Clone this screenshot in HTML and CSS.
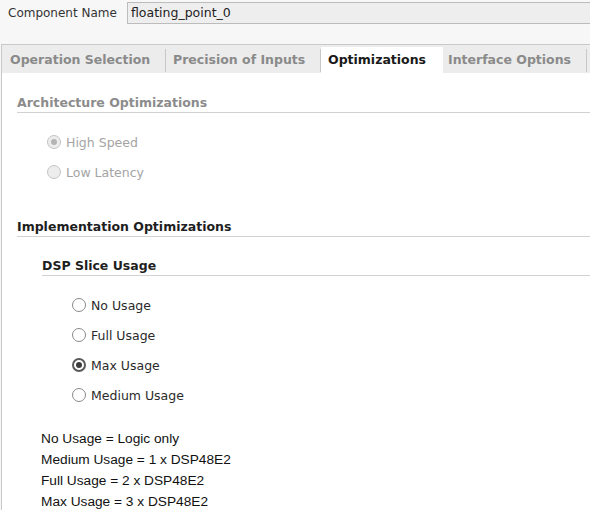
FILE: index.html
```html
<!DOCTYPE html>
<html>
<head>
<meta charset="utf-8">
<link rel="stylesheet" href="styles.css">
</head>
<body>
<div class="top">
  <span class="label">Component Name</span>
  <div class="field">floating_point_0</div>
</div>
<div class="pane">
  <div class="tabs">
    <div class="tab t1">Operation Selection</div><span class="sep"></span>
    <div class="tab t2">Precision of Inputs</div><span class="sep"></span>
    <div class="tab t3 active">Optimizations</div>
    <div class="tab t4">Interface Options</div><span class="sep"></span>
  </div>
  <div class="content">
    <div class="heading dim h1">Architecture Optimizations</div>
    <div class="radios arch">
      <div class="row disabled"><span class="radio checked"></span><span>High Speed</span></div>
      <div class="row disabled"><span class="radio"></span><span>Low Latency</span></div>
    </div>
    <div class="heading h2">Implementation Optimizations</div>
    <div class="sub">
      <div class="heading h3">DSP Slice Usage</div>
      <div class="radios dsp">
        <div class="row"><span class="radio"></span><span>No Usage</span></div>
        <div class="row"><span class="radio"></span><span>Full Usage</span></div>
        <div class="row"><span class="radio checked"></span><span>Max Usage</span></div>
        <div class="row"><span class="radio"></span><span>Medium Usage</span></div>
      </div>
      <div class="notes">
        <div>No Usage = Logic only</div>
        <div>Medium Usage = 1 x DSP48E2</div>
        <div>Full Usage = 2 x DSP48E2</div>
        <div>Max Usage = 3 x DSP48E2</div>
      </div>
    </div>
  </div>
</div>
</body>
</html>
```
FILE: styles.css
```css
html, body {
  margin: 0;
  padding: 0;
  background: #f7f7f7;
  font-family: "DejaVu Sans", sans-serif;
  font-size: 12.5px;
  color: #222;
  overflow: hidden;
  width: 590px;
  height: 510px;
}
.top {
  display: flex;
  align-items: flex-start;
  height: 44px;
  padding-top: 2px;
  box-sizing: border-box;
}
.label {
  margin-left: 8px;
  width: 119px;
  line-height: 22px;
  font-size: 12px;
  color: #333;
  white-space: nowrap;
}
.field {
  flex: 1;
  height: 20px;
  line-height: 20px;
  background: #eeeeee;
  border: 1px solid #bcbcbc;
  border-right: none;
  padding-left: 3px;
  color: #222;
}
.pane {
  border-top: 1px solid #c8c8c8;
  border-left: 1px solid #c8c8c8;
  margin-left: 1px;
  background: #fff;
  height: 466px;
}
.tabs {
  display: flex;
  align-items: flex-end;
  height: 28px;
  background: #ececec;
}
.tab {
  height: 26px;
  line-height: 26px;
  font-weight: bold;
  color: #8a8a8a;
  box-sizing: border-box;
  white-space: nowrap;
}
.t1 { width: 163px; padding-left: 8px; }
.t2 { width: 154px; padding-left: 7px; }
.t3 { width: 122px; padding-left: 7px; }
.t4 { width: 143px; padding-left: 5px; }
.tab.active {
  background: #fff;
  color: #1a1a1a;
}
.sep {
  width: 1px;
  height: 23px;
  background: #c8c8c8;
  align-self: center;
  margin-top: 2px;
}
.content {
  background: #fff;
}
.heading {
  font-weight: bold;
  line-height: 16px;
  padding-bottom: 1px;
  border-bottom: 1px solid #d2d2d2;
  color: #1e1e1e;
}
.heading.dim { color: #8c8c8c; }
.h1 { margin-left: 15px; margin-top: 22px; }
.h2 { margin-left: 15px; margin-top: 32px; }
.sub { margin-left: 40px; }
.h3 { margin-top: 21px; }
.radios { display: flex; flex-direction: column; }
.arch { margin-top: 14px; margin-left: 45px; }
.dsp { margin-top: 14px; margin-left: 30px; }
.row {
  display: flex;
  align-items: center;
  height: 30px;
  gap: 5px;
  color: #2a2a2a;
}
.row.disabled { color: #a4a4a4; }
.radio {
  width: 12px;
  height: 12px;
  border-radius: 50%;
  border: 1px solid #8a8a8a;
  background: #fff;
  position: relative;
  flex: none;
}
.row.disabled .radio {
  border-color: #c4c4c4;
  background: #ededed;
}
.radio.checked {
  border: 2px solid #5a5a5a;
  width: 10px;
  height: 10px;
}
.radio.checked::after {
  content: "";
  position: absolute;
  left: 2px;
  top: 2px;
  width: 6px;
  height: 6px;
  border-radius: 50%;
  background: #3c3c3c;
}
.row.disabled .radio.checked {
  border: 1px solid #c4c4c4;
  width: 12px;
  height: 12px;
}
.row.disabled .radio.checked::after {
  left: 3px;
  top: 3px;
  background: #b4b4b4;
}
.notes {
  margin-top: 18px;
  margin-left: -1px;
  font-family: "Liberation Sans", Arial, sans-serif;
  font-size: 13.7px;
  line-height: 21px;
  color: #111;
}
```
